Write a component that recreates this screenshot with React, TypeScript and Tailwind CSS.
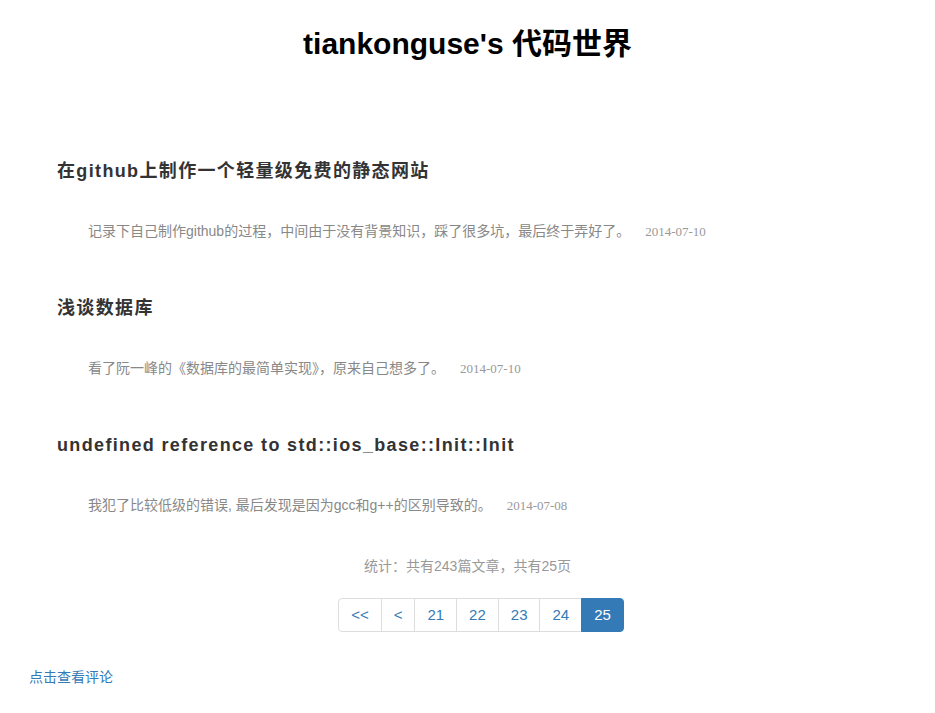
const posts = [
  {
    title: "在github上制作一个轻量级免费的静态网站",
    summary: "记录下自己制作github的过程，中间由于没有背景知识，踩了很多坑，最后终于弄好了。",
    date: "2014-07-10",
  },
  {
    title: "浅谈数据库",
    summary: "看了阮一峰的《数据库的最简单实现》，原来自己想多了。",
    date: "2014-07-10",
  },
  {
    title: "undefined reference to std::ios_base::Init::Init",
    summary: "我犯了比较低级的错误, 最后发现是因为gcc和g++的区别导致的。",
    date: "2014-07-08",
  },
];

const pages = ["<<", "<", "21", "22", "23", "24", "25"];

export default function App() {
  return (
    <div className="min-h-[713px] bg-white font-['Liberation_Sans','Noto_Sans_CJK_SC',sans-serif] text-[#333]">
      <h1 className="pt-[24px] text-center text-[30px] font-bold leading-[40px] text-black">
        tiankonguse's 代码世界
      </h1>

      <div className="mt-[92px] px-[57px]">
        {posts.map((p, i) => (
          <div key={i} className="h-[137px]">
            <h2 className="h-[30px] text-[18px] font-bold leading-[30px] tracking-[1.35px] text-[#333]">
              {p.title}
            </h2>
            <p className="mt-[35px] pl-[31px] text-[14px] leading-[20px] text-[#888]">
              {p.summary}
              <span className="ml-[15px] font-['Liberation_Serif',serif] text-[13px] text-[#999]">
                {p.date}
              </span>
            </p>
          </div>
        ))}
      </div>

      <div className="-mt-[11px] text-center text-[14px] leading-[20px] text-[#999]">
        统计：共有243篇文章，共有25页
      </div>

      <div className="mt-[22px] flex justify-center pl-[27px]">
        <ul className="flex">
          {pages.map((pg, i) => {
            const active = pg === "25";
            return (
              <li
                key={i}
                className={
                  (active
                    ? "border-[#337ab7] bg-[#337ab7] text-white rounded-r-[4px] "
                    : "border-[#ddd] bg-white text-[#337ab7] ") +
                  (i === 0 ? "rounded-l-[4px] " : "-ml-px ") +
                  "flex h-[34px] items-center border px-[12px] text-[15px]"
                }
              >
                {pg}
              </li>
            );
          })}
        </ul>
      </div>

      <div className="mt-[35px] pl-[29px] text-[14px] leading-[20px] text-[#337ab7]">
        点击查看评论
      </div>
    </div>
  );
}
